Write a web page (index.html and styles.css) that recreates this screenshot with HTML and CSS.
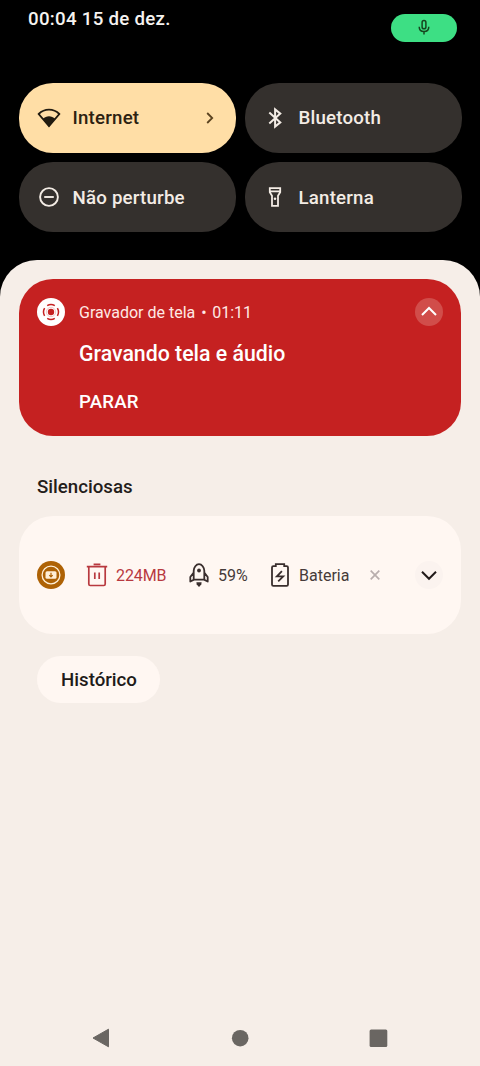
FILE: index.html
```html
<!DOCTYPE html>
<html lang="pt-BR">
<head>
<meta charset="utf-8">
<title>Notificações</title>
<link rel="stylesheet" href="styles.css">
</head>
<body>
<div class="screen">
  <header class="status">
    <span class="clock">00:04 15 de dez.</span>
    <span class="mic-pill">
      <svg width="18" height="18" viewBox="0 0 18 18" fill="none" stroke="#17451f" stroke-width="1.5"><rect x="7.1" y="1.600" width="3.8" height="8.2" rx="1.9"/><path d="M4.2 7.700c0 3 2 4.8 4.8 4.8s4.8-1.8 4.8-4.8M9 12.500v3"/></svg>
    </span>
  </header>

  <section class="tiles">
    <div class="tile tile-on">
      <svg class="tile-icon" width="24" height="24" viewBox="0 0 24 24"><path d="M1.700 8C7.400 2.200 16.600 2.200 22.300 8L12 20z" fill="none" stroke="#211b10" stroke-width="1.8"/><path d="M5.900 12.700c3.300-3.400 8.900-3.400 12.200 0L12 20.800z" fill="#211b10"/></svg>
      <span>Internet</span>
      <svg class="go" width="10" height="14" viewBox="0 0 10 14" fill="none" stroke="#5b4320" stroke-width="1.8"><path d="M2.200 2l5 5-5 5"/></svg>
    </div>
    <div class="tile">
      <svg class="tile-icon" width="24" height="24" viewBox="0 0 24 24" fill="none" stroke="#f3ece5" stroke-width="2"><path d="M6.300 6.600l11 9.800-5.200 4.200V3.400l5.200 4.200-11 9.800"/></svg>
      <span>Bluetooth</span>
    </div>
    <div class="tile">
      <svg class="tile-icon" width="24" height="24" viewBox="0 0 24 24" fill="none" stroke="#f3ece5" stroke-width="1.9"><circle cx="12" cy="12" r="8.900"/><path d="M7.200 12h9.600"/></svg>
      <span>Não perturbe</span>
    </div>
    <div class="tile">
      <svg class="tile-icon" width="24" height="24" viewBox="0 0 24 24" fill="none" stroke="#f3ece5" stroke-width="1.8"><path d="M6.800 3.100h10.400v4.100l-2.200 3.600v10.100H9V10.800L6.800 7.200zM6.800 6.300h10.400"/><circle cx="12" cy="13.800" r="1.300" fill="#f3ece5" stroke="none"/></svg>
      <span>Lanterna</span>
    </div>
  </section>

  <main class="shade">
    <article class="recorder">
      <div class="recorder-head">
        <svg width="28" height="28" viewBox="0 0 28 28"><circle cx="14" cy="14" r="14" fill="#fff"/><circle cx="14" cy="14" r="3.200" fill="#c52121"/><path d="M10.200 7.600a7.500 7.500 0 0 1 7.600 0M10.200 20.400a7.500 7.500 0 0 0 7.600 0M7.600 10.200a7.500 7.500 0 0 0 0 7.600M20.400 10.200a7.500 7.500 0 0 1 0 7.600" fill="none" stroke="#c52121" stroke-width="1.500"/><circle cx="14" cy="14" r="4.700" fill="none" stroke="#c52121" stroke-width="0.800" opacity=".3"/></svg>
        <div class="recorder-app"><span>Gravador de tela</span><span class="dot">•</span><span>01:11</span></div>
        <span class="round collapse"><svg width="28" height="28" viewBox="0 0 28 28" fill="none" stroke="#fff" stroke-width="2"><path d="M7 17l7-7 7 7"/></svg></span>
      </div>
      <h1 class="recorder-title">Gravando tela e áudio</h1>
      <div class="recorder-stop"><span>PARAR</span></div>
    </article>

    <h2 class="section-title"><span>Silenciosas</span></h2>

    <article class="silent">
      <svg class="app" width="28" height="28" viewBox="0 0 28 28"><circle cx="14" cy="14" r="14" fill="#ae6205"/><circle cx="14" cy="14" r="8.900" fill="none" stroke="#fff0d8" stroke-width="1.300"/><rect x="8.500" y="10.300" width="11" height="7.400" rx="1.500" fill="#fff0d8"/><path d="M14 11.800v4M12.300 14.100l1.700 1.700 1.700-1.700" fill="none" stroke="#ae6205" stroke-width="1.200"/></svg>
      <svg class="trash" width="22" height="24" viewBox="0 0 22 24" fill="none" stroke="#b8393f" stroke-width="1.700"><path d="M.8 3.700h20.400M7.600 1.300h6.800M2.800 3.700v17.400q0 1.400 1.400 1.400h13.600q1.400 0 1.400-1.400V3.700M8.800 9.500v6.500M13.200 9.500v6.500"/></svg>
      <span class="size">224MB</span>
      <svg class="rocket" width="20" height="24" viewBox="0 0 20 24" fill="none" stroke="#392e2d" stroke-width="1.800" stroke-linejoin="round"><path d="M4.700 16V7.800C4.700 4.400 7.200 1.200 10 1.200s5.300 3.200 5.300 6.600V16M4.700 9.600L1.300 14v4.500L5 16.600h10l3.700 1.900V14l-3.400-4.400"/><circle cx="10" cy="7.500" r="1.900" fill="#392e2d" stroke="none"/><path d="M7.400 19.200h5.200l-.3 2.400L10 24l-2.300-2.400z" fill="#392e2d" stroke="none"/></svg>
      <span class="boost">59%</span>
      <svg class="battery" width="18" height="24" viewBox="0 0 18 24" fill="none" stroke="#392e2d" stroke-width="1.800"><path d="M4.800 3.200V1.100h8.400v2.100h2.500q1.300 0 1.300 1.300v17q0 1.300-1.300 1.300H2.300Q1 22.800 1 21.500v-17q0-1.300 1.300-1.300z"/><path d="M10.900 8.200l-5 5.100h6.300l-5 5"/></svg>
      <span class="batt">Bateria</span>
      <svg class="close" width="10" height="10" viewBox="0 0 10 10" stroke="#b9aead" stroke-width="1.700"><path d="M.7.7l8.600 8.600M9.300.7L.7 9.300"/></svg>
      <span class="round expand"><svg width="28" height="28" viewBox="0 0 28 28" fill="none" stroke="#211a19" stroke-width="2"><path d="M7 10.800l7 7 7-7"/></svg></span>
    </article>

    <button class="history"><span>Histórico</span></button>

    <nav class="nav">
      <svg width="20" height="20" viewBox="0 0 20 20"><path d="M2 10L17.500 1.200v17.600z" fill="#6a6662" stroke="#6a6662" stroke-linejoin="round"/></svg>
      <svg width="20" height="20" viewBox="0 0 20 20"><circle cx="10.200" cy="10.200" r="8.300" fill="#6a6662"/></svg>
      <svg width="20" height="20" viewBox="0 0 20 20"><rect x="0.600" y="1.400" width="17.700" height="17.700" rx="1.500" fill="#6a6662"/></svg>
    </nav>
  </main>
</div>
</body>
</html>
```

FILE: styles.css
```css
* { box-sizing: border-box; }
body { margin: 0; background: #000; font-family: Roboto, "Noto Sans", sans-serif; }
svg { display: block; flex: none; }
span, h1, h2 { white-space: nowrap; }
.screen { width: 480px; height: 1066px; display: flex; flex-direction: column; overflow: hidden; background: #000; }

.status { height: 82.5px; padding: 8px 23px 0 28px; display: flex; justify-content: space-between; align-items: flex-start; color: #f6f3f0; }
.clock { font-size: 18.7px; font-weight: 500; line-height: 22px; letter-spacing: .28px; }
.mic-pill { width: 66px; height: 28px; margin-top: 6px; border-radius: 14px; background: #3ddf84; display: flex; align-items: center; justify-content: center; }

.tiles { display: grid; grid-template-columns: 217px 217px; grid-auto-rows: 70px; gap: 9.5px 9px; padding-left: 18.5px; height: 177.5px; }
.tile { border-radius: 34px; background: #34302d; color: #f3ece5; display: flex; align-items: center; padding: 1px 21px 0 18.5px; font-size: 18.7px; font-weight: 500; letter-spacing: .2px; }
.tile-icon { margin: -1px 11.5px 0 0; }
.tile-on { background: #ffdea6; color: #2c2111; }
.go { margin: -1px 0 0 auto; }

.shade { flex: 1; background: #f6eee8; border-radius: 37px 37px 0 0; padding: 19px 19px 0; display: flex; flex-direction: column; }
.recorder { height: 157px; border-radius: 34px; background: #c52121; color: #fff; padding: 18.5px 18.5px 0 18px; }
.recorder-head { display: flex; align-items: center; height: 28px; }
.recorder-app { display: flex; margin: 2px 0 0 14px; font-size: 16px; color: #ffe9e5; }
.dot { margin: 0 5.5px 0 6px; }
.round { width: 28px; height: 28px; border-radius: 50%; margin-left: auto; }
.collapse { background: #d14d4a; }
.recorder-title { margin: 15px 0 0 42px; font-size: 21.3px; line-height: 26px; font-weight: 500; }
.recorder-stop { margin: 24px 0 0 42px; font-size: 18.7px; line-height: 22px; font-weight: 500; letter-spacing: .15px; }

.section-title { margin: 39px 0 0 18px; font-size: 18.7px; line-height: 24px; font-weight: 500; color: #241d1a; }
.silent { height: 118px; margin-top: 17px; border-radius: 34px; background: #fff7f2; display: flex; align-items: center; padding: 0 18.5px 0 18px; font-size: 16px; color: #463b39; }
.trash { margin-left: 21px; }
.size { margin-left: 8px; width: 73px; color: #b8393f; letter-spacing: -.1px; }
.boost { margin-left: 9px; width: 53px; }
.batt { margin-left: 10px; width: 71px; }
.expand { background: #fbf3ef; }
.history { align-self: flex-start; margin: 22px 0 0 18px; width: 123px; height: 47px; border: 0; border-radius: 24px; background: #fff7f2; color: #211a18; font: 500 18.7px Roboto, sans-serif; padding: 0 0 0 1px; }
.nav { margin: auto 0 18px; padding: 0 72px; display: flex; justify-content: space-between; }
```
